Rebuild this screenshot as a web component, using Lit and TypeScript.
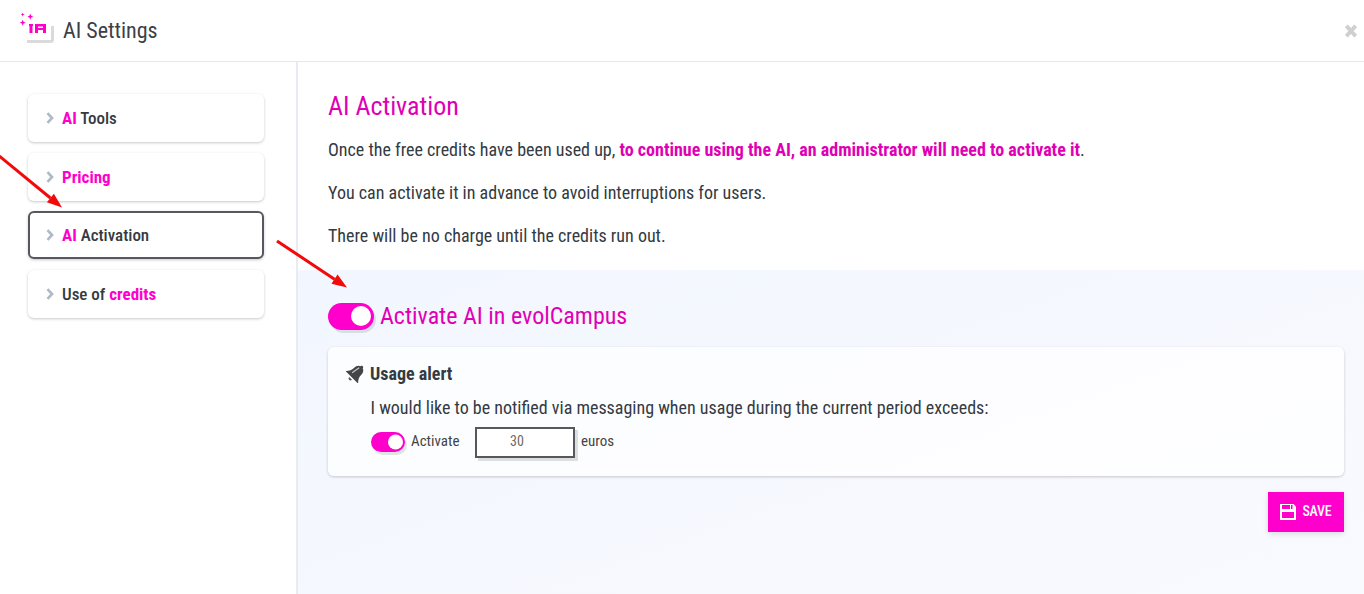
import { LitElement, html, css, svg } from "lit";
import { customElement } from "lit/decorators.js";

@customElement("app-root")
export class AppRoot extends LitElement {
  static styles = css`
    :host { display: block; position: relative; width: 1364px; height: 594px; overflow: hidden; background: #fff; font-family: Roboto, "Liberation Sans", sans-serif; color: #333a42; font-stretch: 75%; }
    * { box-sizing: border-box; }
    .pk { color: #ff00cc; font-weight: 700; }
    header { height: 62px; border-bottom: 1px solid #e4e7ec; display: flex; align-items: center; padding: 0 7px 0 19px; }
    .logo { width: 38px; height: 34px; margin: 0 6px 1px 0; flex: none; }
    h1 { margin: 0; font-size: 22px; font-weight: 400; flex: 1; color: #3b4148; }
    .close { width: 12px; height: 14px; }
    .body { display: flex; height: 532px; }
    aside { width: 298px; border-right: 2px solid #e8ebf0; padding: 32px 32px 0 28px; display: flex; flex-direction: column; gap: 10.5px; flex: none; }
    .item { height: 48px; width: 236px; border-radius: 6px; background: #fff; box-shadow: 0 1px 3px rgba(0,0,0,.22); display: flex; align-items: center; padding-left: 18px; gap: 8px; font-size: 17px; font-weight: 500; }
    .item.active { border: 2px solid #55585c; padding-left: 16px; }
    .item svg { width: 8px; height: 12px; flex: none; }
    main { flex: 1; min-width: 0; display: flex; flex-direction: column; }
    .intro { height: 208px; padding: 28px 30px 0; }
    h2 { margin: 0 0 17px; font-size: 26px; font-weight: 400; color: #e000b4; line-height: 32px; }
    .intro p { margin: 0 0 22px; font-size: 18px; line-height: 21px; }
    .intro strong { color: #e000b4; font-weight: 700; }
    .panel { flex: 1; background: linear-gradient(160deg, #f2f6fe 0%, #f9fafe 100%); padding: 30px 20px 0 30px; display: flex; flex-direction: column; }
    .head { display: flex; align-items: center; gap: 6px; height: 32px; font-size: 24px; color: #e000b4; }
    .toggle { background: #ff00cc; border-radius: 99px; position: relative; box-shadow: 2px 3px 0 rgba(0,0,0,.1); flex: none; }
    .toggle.lg { width: 46px; height: 27px; }
    .toggle.sm { width: 34px; height: 20px; margin-bottom: 2px; }
    .toggle::after { content: ""; position: absolute; background: #fff; border-radius: 50%; top: 50%; transform: translateY(-50%); }
    .toggle.lg::after { width: 20px; height: 20px; right: 3px; }
    .toggle.sm::after { width: 15px; height: 15px; right: 2px; }
    .card { margin-top: 15px; height: 129px; background: rgba(255,255,255,.75); border-radius: 6px; box-shadow: 0 1px 3px rgba(0,0,0,.2); padding: 15px 18px 0; }
    .title { display: flex; align-items: center; gap: 5px; font-size: 18px; font-weight: 700; height: 22px; margin-bottom: 13px; }
    .title svg { width: 19px; height: 19px; }
    .desc { margin-left: 24.500px; font-size: 18px; line-height: 22px; }
    .row { margin: 8px 0 0 25px; display: flex; align-items: center; font-size: 15px; height: 31px; }
    .row .lab { margin: 0 0 3px 6px; width: 64px; color: #444; }
    .input { width: 100px; height: 31px; border: 2px solid #55585c; background: #fff; box-shadow: 3px 3px 0 rgba(0,0,0,.12); color: #6f6a60; text-align: center; font-size: 14px; line-height: 25px; padding-right: 16px; }
    .row .unit { margin: 0 0 3px 6px; color: #444; }
    .actions { display: flex; justify-content: flex-end; margin-top: 16px; }
    .save { width: 76px; height: 40px; background: #ff00cc; color: #fff; display: flex; align-items: center; justify-content: center; gap: 6px; font-size: 14px; font-weight: 500; letter-spacing: -.2px; box-shadow: 0 2px 6px rgba(0,0,0,.12); }
    .save span { margin-bottom: 2px; }
    .save svg { width: 16px; height: 16px; }
    .arrows { position: absolute; inset: 0; pointer-events: none; }
  `;

  private chev() {
    return html`<svg viewBox="0 0 8 12"><path d="M1.500 1.200 6 6l-4.500 4.800" fill="none" stroke="#b0bac6" stroke-width="2.700"/></svg>`;
  }

  render() {
    return html`
      <header>
        <svg class="logo" viewBox="0 0 38 34">
          <path d="M9 11h23a2 2 0 0 1 2 2v13a2 2 0 0 1-2 2H9a3 3 0 0 1-3-3V14a3 3 0 0 1 3-3z" fill="#fff"/>
          <path d="M33.500 13v13.500a2 2 0 0 1-2 2H8" fill="none" stroke="#dadada" stroke-width="3"/>
          <g fill="#ff00cc">
            <rect x="10" y="11" width="4" height="2"/><rect x="10.500" y="13" width="3" height="7"/>
            <path d="M16 11h11v9h-3v-3h-5v3h-3zm3 2.500v1.500h5v-1.500z"/>
            <path d="M3.700-.500l.6 1.400 1.400.6-1.400.6-.6 1.400-.6-1.400-1.400-.6 1.400-.6z"/>
            <path d="M11.300 .700l.9 2.100 2.100.9-2.100.9-.9 2.100-.9-2.100-2.100-.9 2.100-.9z"/>
            <path d="M3.700 6.700l.9 2.100 2.100.9-2.100.9-.9 2.100-.9-2.100-2.100-.9 2.100-.9z"/>
          </g>
        </svg>
        <h1>AI Settings</h1>
        <svg class="close" viewBox="0 0 12 14"><path d="M1.300 1.800l9.400 10.400M10.700 1.800l-9.400 10.400" stroke="#cfcfcf" stroke-width="4"/></svg>
      </header>
      <div class="body">
        <aside>
          <div class="item">${this.chev()}<span><span class="pk">AI</span> Tools</span></div>
          <div class="item">${this.chev()}<span class="pk">Pricing</span></div>
          <div class="item active">${this.chev()}<span><span class="pk">AI</span> Activation</span></div>
          <div class="item">${this.chev()}<span>Use of <span class="pk">credits</span></span></div>
        </aside>
        <main>
          <div class="intro">
            <h2>AI Activation</h2>
            <p>Once the free credits have been used up, <strong>to continue using the AI, an administrator will need to activate it</strong>.</p>
            <p>You can activate it in advance to avoid interruptions for users.</p>
            <p>There will be no charge until the credits run out.</p>
          </div>
          <div class="panel">
            <div class="head"><span class="toggle lg"></span>Activate AI in evolCampus</div>
            <div class="card">
              <div class="title">
                <svg viewBox="0 0 19 19">
                  <g transform="translate(.500 -.500) rotate(45 9.500 9.500)">
                    <path d="M9.500 0c.9 0 1.500.6 1.500 1.500 2.500.8 3.500 3 3.500 5.500 0 3.500 1 5.500 3.500 8v.5H1V15c2.500-2.500 3.500-4.500 3.500-8 0-2.500 1-4.700 3.500-5.500C8 .6 8.600 0 9.500 0z" fill="#454545"/>
                    <path d="M7.500 17.200h4a2 2 0 0 1-4 0z" fill="#555"/>
                    <path d="M6.500 12 8 3.500" fill="none" stroke="#c8c8c8" stroke-width="1.200"/>
                  </g>
                </svg>
                Usage alert
              </div>
              <div class="desc">I would like to be notified via messaging when usage during the current period exceeds:</div>
              <div class="row">
                <span class="toggle sm"></span><span class="lab">Activate</span>
                <span class="input">30</span><span class="unit">euros</span>
              </div>
            </div>
            <div class="actions">
              <div class="save">
                <svg viewBox="0 0 16 16">
                  <path d="M0 0h13.500L16 2.500V16H0z" fill="#fff"/>
                  <rect x="2" y="1" width="8" height="4" fill="#ff00cc"/>
                  <rect x="11" y="1" width="1.500" height="4" fill="#ff00cc"/>
                  <rect x="2" y="8" width="12" height="6" fill="#ff00cc"/>
                </svg>
                <span>SAVE</span>
              </div>
            </div>
          </div>
        </main>
      </div>
      <svg class="arrows" viewBox="0 0 1364 594">
        ${[[-2, 155, 62, 207.500], [277, 241, 347, 287.500]].map(([a, b, c, d]) => {
          const ang = Math.atan2(d - b, c - a);
          const L = 15, W = 5.500;
          const bx = c - L * Math.cos(ang), by = d - L * Math.sin(ang);
          const nx = -Math.sin(ang) * W, ny = Math.cos(ang) * W;
          return svg`<path d="M${a} ${b}L${bx} ${by}" stroke="#f00a0a" stroke-width="3"/><path d="M${c} ${d}L${bx + nx} ${by + ny}L${bx - nx} ${by - ny}z" fill="#f00a0a"/>`;
        })}
      </svg>
    `;
  }
}
